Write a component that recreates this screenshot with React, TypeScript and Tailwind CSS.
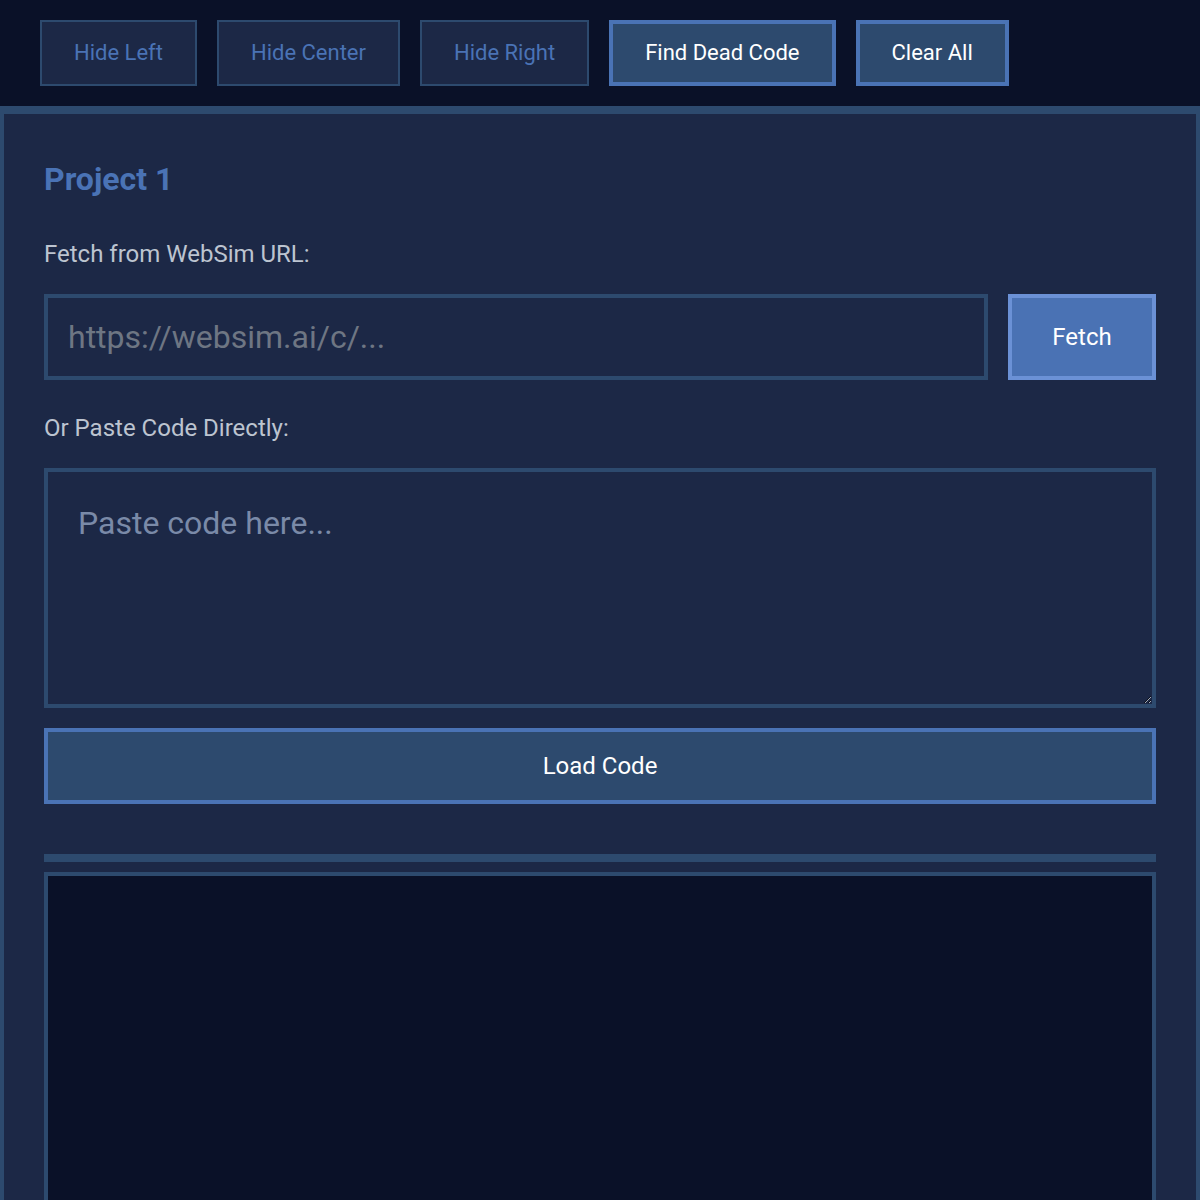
import React from "react";

export default function App() {
  const font = { fontFamily: "Roboto, 'Liberation Sans', sans-serif" };
  return (
    <div className="min-h-[1200px] bg-[#1c2846]" style={font}>
      <div className="flex gap-5 bg-[#0a1128] px-10 py-5">
        <button className="h-[66px] border-2 border-[#2d4a6e] bg-[#1c2846] px-8 pb-[2px] text-[22px] text-[#4a73b5]">Hide Left</button>
        <button className="h-[66px] border-2 border-[#2d4a6e] bg-[#1c2846] px-8 pb-[2px] text-[22px] text-[#4a73b5]">Hide Center</button>
        <button className="h-[66px] border-2 border-[#2d4a6e] bg-[#1c2846] px-8 pb-[2px] text-[22px] text-[#4a73b5]">Hide Right</button>
        <button className="h-[66px] border-4 border-[#4a73b5] bg-[#2d4a6e] px-8 pb-[2px] text-[22px] text-white">Find Dead Code</button>
        <button className="h-[66px] border-4 border-[#4a73b5] bg-[#2d4a6e] px-8 pb-[2px] text-[22px] text-white">Clear All</button>
      </div>
      <div className="border-x-4 border-t-8 border-[#2d4a6e] bg-[#1c2846] px-10 pt-[45px]">
        <h2 className="text-[32px] font-bold leading-[40px] text-[#4a73b5]">Project 1</h2>
        <div className="mt-[40px] text-[24px] leading-[30px] text-[#bcc4d0]">Fetch from WebSim URL:</div>
        <div className="mt-[25px] flex gap-5">
          <input
            className="h-[86px] flex-1 border-4 border-[#2d4a6e] bg-[#1c2846] px-5 text-[32px] text-white outline-none placeholder:text-[#6e7683]"
            placeholder="https://websim.ai/c/..."
          />
          <button className="h-[86px] w-[148px] border-4 border-[#6b91d6] bg-[#4a72b4] text-[24px] text-white">Fetch</button>
        </div>
        <div className="mt-[33px] text-[24px] leading-[30px] text-[#bcc4d0]">Or Paste Code Directly:</div>
        <textarea
          className="mt-[25px] block h-[240px] w-full border-4 border-[#2d4a6e] bg-[#1c2846] px-[30px] pt-[29px] pb-[32px] text-[32px] leading-[44px] text-white outline-none placeholder:text-[#7a8aa8]"
          placeholder="Paste code here..."
        />
        <button className="mt-5 h-[76px] w-full border-4 border-[#4a73b5] bg-[#2d4a6e] text-[24px] text-white">Load Code</button>
        <div className="mt-[50px] h-2 bg-[#2d4a6e]" />
        <div className="mt-[10px] h-[400px] border-4 border-[#2d4a6e] bg-[#0a1128]" />
      </div>
    </div>
  );
}
